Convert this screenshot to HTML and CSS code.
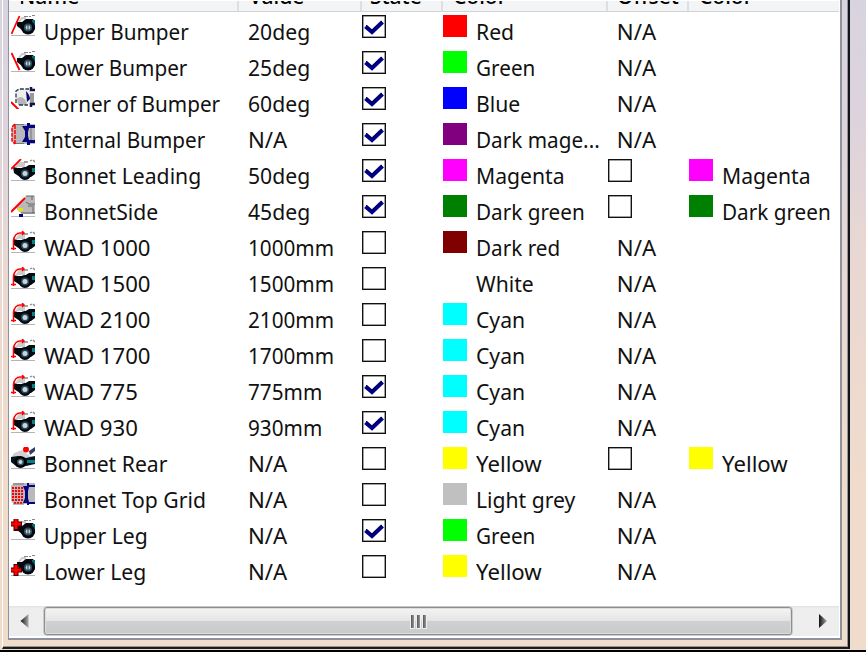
FILE: index.html
```
<!DOCTYPE html>
<html lang="en"><head><meta charset="utf-8"><title>Settings list</title><link rel="stylesheet" href="styles.css"></head>
<body>
<svg class="defs" aria-hidden="true">
<symbol id="wheel" viewBox="0 0 24 22"><path d="M0 20.5h24" stroke="#b5b5b5"/><path d="M8 7l3-4h3v4" stroke="#ccc" stroke-width="2" fill="none"/><path d="M13 1.500h4M18 1.500h2M21 .5h3" stroke="#888"/><path d="M6 7l5 0 4-3 7 0 2 3v7l-5 5-8-4-5-4z" fill="#050b10"/><path d="M21 5h3v6h-3z" fill="#076b6b"/><circle cx="17" cy="12.500" r="7" fill="#020914"/><circle cx="17" cy="12.500" r="4" fill="#35535e"/><circle cx="17" cy="12.500" r="2.300" fill="#c4d6de"/><path d="M17 9v7" stroke="#243c48"/></symbol>
<symbol id="upper" viewBox="0 0 24 22"><use href="#wheel"/><path d="M.5 19L8.500 1" stroke="red" stroke-width="1.800"/></symbol>
<symbol id="lower" viewBox="0 0 24 22"><use href="#wheel"/><path d="M.5 2l8 17" stroke="red" stroke-width="1.800"/></symbol>
<symbol id="corner" viewBox="0 0 24 22"><path d="M7 2h11l2 5-1 10-10 1-4-4V5z" fill="#eee"/><path d="M6 11l4-1q5 1 6 8H7z" fill="#b5b5b5"/><path d="M5 16V4l3-2h10M8 18h9" fill="none" stroke="#233a4a" stroke-width="1.300" stroke-dasharray="4 1.500"/><path d="M15 4q4 4 4 8l-3 3z" fill="#090970"/><path d="M19 6h4v10h-4z" fill="#999"/><path d="M20 0v3h4M20 20v-3h4" fill="none" stroke="#121244" stroke-width="2.500"/><path d="M0 15l8 8" stroke="red" stroke-width="2"/></symbol>
<symbol id="internal" viewBox="0 0 24 22"><path d="M3 1h21v20H3L1 18V3z" fill="#b8b8bd"/><path d="M11 3h5V0h3v2h5v3h-6l-1 4v4l1 4h6v3h-5v2h-3v-3h-5l3-5V8z" fill="#05057f"/><path d="M4 1.500h9M4 20.500h9M20 5v12" stroke="#777"/><path d="M4 1L1 4v14l3 3M4 2v19" fill="none" stroke="red" stroke-width="1.500" stroke-dasharray="4 1"/></symbol>
<symbol id="tyre" viewBox="0 0 24 22"><path d="M0 21.500h24" stroke="#b5b5b5"/><path d="M4 8l4-5h6v5z" fill="#ccc"/><path d="M13 3h4M19 2l2-1M22 1l2 2" stroke="#888" stroke-width="1.300"/><path d="M2 8l5 1 6 0 5-3h6v9l-4 3H9l-6-4z" fill="#040b0e"/><path d="M21 9h3v4h-3z" fill="#078080"/><circle cx="14" cy="14.500" r="6.500" fill="#020914"/><circle cx="14" cy="14.500" r="4" fill="#2b4858"/><circle cx="14" cy="14.500" r="2.500" fill="#c4d6de"/></symbol>
<symbol id="leading" viewBox="0 0 24 22"><use href="#tyre"/><path d="M0 10L10 0" stroke="red" stroke-width="1.800"/></symbol>
<symbol id="side" viewBox="0 0 24 22"><path d="M5 12L15 1h9v18H12l-5-3z" fill="#b9b9b9"/><path d="M15 1h8M10 18h14M17 11h6M15 7l3 2h6M21 1v4M22 12v6" stroke="#666" fill="none"/><path d="M7 13h5v3H7z" fill="#e8e400"/><path d="M8 19h4v3H8z" fill="#00007a"/><path d="M0 21.500h8M12 21.500h12" stroke="#bbb"/><path d="M0 17L14 3" stroke="red" stroke-width="2"/></symbol>
<symbol id="wad" viewBox="0 0 24 22"><use href="#tyre"/><path d="M2.500 19V9Q4 2 9 2h4M0 17.500h5M11 0l2 2-2 2" stroke="red" stroke-width="1.500" fill="none"/></symbol>
<symbol id="rear" viewBox="0 0 24 22"><path d="M0 21.500h24" stroke="#b5b5b5"/><path d="M0 11l3-5 8-3 8 6 5 1v5H3z" fill="#d0d2d2"/><path d="M18 4l6-4v4l-5 4z" fill="#333c65"/><path d="M0 10l7-1 8 2 9-2v8l-9 2H5l-5-4z" fill="#061421"/><path d="M16 13h8v3h-8z" fill="#078080"/><circle cx="9.500" cy="15" r="6"/><circle cx="9.500" cy="15" r="3.500" fill="#35535e"/><circle cx="9.500" cy="15" r="2" fill="#c4d6de"/><circle cx="15" cy="2.500" r="3" fill="red"/></symbol>
<symbol id="grid" viewBox="0 0 24 22"><path d="M3 0h21v21H3L0 18V3z" fill="#b8b8bd"/><path d="M12 3h4V0h2v2h6v2h-6l-1 4v7l1 4h6v2h-6v2h-2v-3h-4l2-5V8z" fill="#05057f"/><path d="M1 5h11M1 8h11M1 11h11M1 14h11M1 17h11M3 20h9" stroke="red" stroke-width="2" stroke-dasharray="2 1"/><path d="M2 1h11M2 21h11" stroke="#777"/></symbol>
<symbol id="ul" viewBox="0 0 24 22"><use href="#wheel"/><path d="M5 0v12M0 5h11" stroke="#400" stroke-width="5"/><path d="M5 0v10M0 5h10" stroke="red" stroke-width="3"/></symbol>
<symbol id="ll" viewBox="0 0 24 22"><use href="#wheel"/><path d="M5 9v12M0 15h11" stroke="#400" stroke-width="5"/><path d="M5 10v10M0 15h10" stroke="red" stroke-width="3"/></symbol>
<symbol id="tick" viewBox="0 0 24 23"><path d="M3.500 11.500l6.500 5.500L20.500 7" fill="none" stroke="#00008f" stroke-width="4.200"/><path d="M4 10l6 5.500L20 6" fill="none" stroke="#00003c"/></symbol>
</svg>
<main class="frame"><section class="panel">
<header class="columns"><span>Name</span><span>Value</span><span>State</span><span>Color</span><span>Offset</span><span>Color</span></header>
<div id="rows" class="rows"></div>
<footer class="scrollbar"><svg class="arrow" viewBox="0 0 34 30"><defs><linearGradient id="ag"><stop stop-color="#111"/><stop offset="1" stop-color="#aaa"/></linearGradient></defs><path d="M11 15l8-7v14z" fill="url(#ag)"/></svg><div class="thumb"><i></i><i></i><i></i></div><svg class="arrow right" viewBox="0 0 47 30"><path d="M27 8l8 7-8 7z" fill="url(#ag)"/></svg></footer>
</section></main>
<script src="rows.js"></script>
</body></html>
```
FILE: styles.css
```
*{box-sizing:border-box}
body{margin:0;width:866px;height:652px;overflow:hidden;background:linear-gradient(#d8d4df,#ddd3dc 18%,#e9d8d2 40%,#efdccb 75%,#efdccb);font-family:"Noto Sans","Open Sans",sans-serif;font-size:22.5px;color:#111;border-bottom:2px solid #000}
.defs{position:absolute;width:0;height:0}
.frame{width:848px;height:649px;margin-left:2px;padding:0 6px 7px 5px;border-left:1px solid #fff;border-right:2px solid #10151b;border-bottom:2px solid #161b1b;box-shadow:inset -1px -1px #92969a}
.panel{height:640px;width:834px;background:#fff;border:solid #8d929e;border-width:0 2px 2px 1px;display:flex;flex-direction:column;padding:1px 1px 2px 0}
.columns{height:11px;flex:none;overflow:hidden;display:grid;grid-template-columns:230px 123px 81px 165px 81px 1fr;background:#f3f4f6;border-bottom:1px solid #d2d3d5;font-size:21px;font-weight:500;color:#000}
.columns span{height:31px;line-height:30px;margin-top:-20.500px;padding-left:10px;border-right:2px solid #dddfe2;white-space:nowrap}
.columns span:nth-child(3){padding-left:8px}
.columns span:nth-child(5){padding-left:9px}
.columns span:last-child{border:0}
.rows{height:595px}
.row{height:36px;display:grid;grid-template-columns:34px 204px 114px 81px 33px 132px 81px 33px 1fr;align-items:start;padding-left:1px}
.row>*{margin-top:3px}
.row .label{margin-top:4px;line-height:32px;white-space:nowrap;transform:scaleX(.94);transform-origin:left}
.row .narrow{transform:scaleX(.92)}
.row .wide{transform:scaleX(.985)}
.row .na{padding-left:9px}
.row .icon{width:24px;height:22px;display:block;margin-left:.5px}
.box{width:24px;height:23px;border:1.500px solid #111;background:#fff;box-shadow:inset 0 0 0 .5px #444}
.box svg{width:24px;height:23px;margin:-1px;display:block}
.swatch{width:24px;height:22px}
.scrollbar{height:30px;display:flex;background:linear-gradient(#e3e3e3,#eee 3px,#ededed);flex:none}
.arrow{width:35px;height:30px}.arrow.right{width:47px}
.thumb{flex:1;height:28px;margin-top:1px;border:1px solid #8e8e8e;border-radius:3px;background:linear-gradient(#f4f4f4,#e5e5e6 48%,#cfd0d3 50%,#c9cacc);display:flex;justify-content:center;align-items:center;gap:3px;box-shadow:inset 0 0 0 1px #ddd,0 0 0 .5px #aaa}
.thumb i{width:3px;height:13px;background:linear-gradient(90deg,#555,#999);box-shadow:0 0 0 1px #eee}
```
FILE: rows.js
```
const rows = [
  ['upper','Upper Bumper','20deg',1,'#f00','Red'],
  ['lower','Lower Bumper','25deg',1,'#0f0','Green'],
  ['corner','Corner of Bumper','60deg',1,'#00f','Blue'],
  ['internal','Internal Bumper','N/A',1,'#800080','Dark mage...'],
  ['leading','Bonnet Leading','50deg',1,'#f0f','Magenta',1],
  ['side','BonnetSide','45deg',1,'#008000','Dark green',1],
  ['wad','WAD 1000','1000mm',0,'#800000','Dark red'],
  ['wad','WAD 1500','1500mm',0,'#fff','White'],
  ['wad','WAD 2100','2100mm',0,'#0ff','Cyan'],
  ['wad','WAD 1700','1700mm',0,'#0ff','Cyan'],
  ['wad','WAD 775','775mm',1,'#0ff','Cyan'],
  ['wad','WAD 930','930mm',1,'#0ff','Cyan'],
  ['rear','Bonnet Rear','N/A',0,'#ff0','Yellow',1],
  ['grid','Bonnet Top Grid','N/A',0,'#c0c0c0','Light grey'],
  ['ul','Upper Leg','N/A',1,'#0f0','Green'],
  ['ll','Lower Leg','N/A',0,'#ff0','Yellow']
];
const width = t => /WAD|N\/A|Yellow/.test(t) ? 'wide' : /Bumper|Green|Dark|mm/.test(t) ? 'narrow' : '';
const label = (t, c = '') => `<span class="label ${width(t)} ${c}">${t}</span>`;
const swatch = c => `<span class="swatch" style="background:${c}"></span>`;
const box = on => `<span class="box">${on ? '<svg><use href="#tick"/></svg>' : ''}</span>`;
document.getElementById('rows').innerHTML = rows.map(([icon, name, value, on, color, text, offset]) =>
  `<div class="row"><svg class="icon"><use href="#${icon}"/></svg>${label(name)}${label(value)}${box(on)}${swatch(color)}${label(text)}${offset ? box(0) + swatch(color) + label(text) : label('N/A', 'na')}</div>`).join('');
```
